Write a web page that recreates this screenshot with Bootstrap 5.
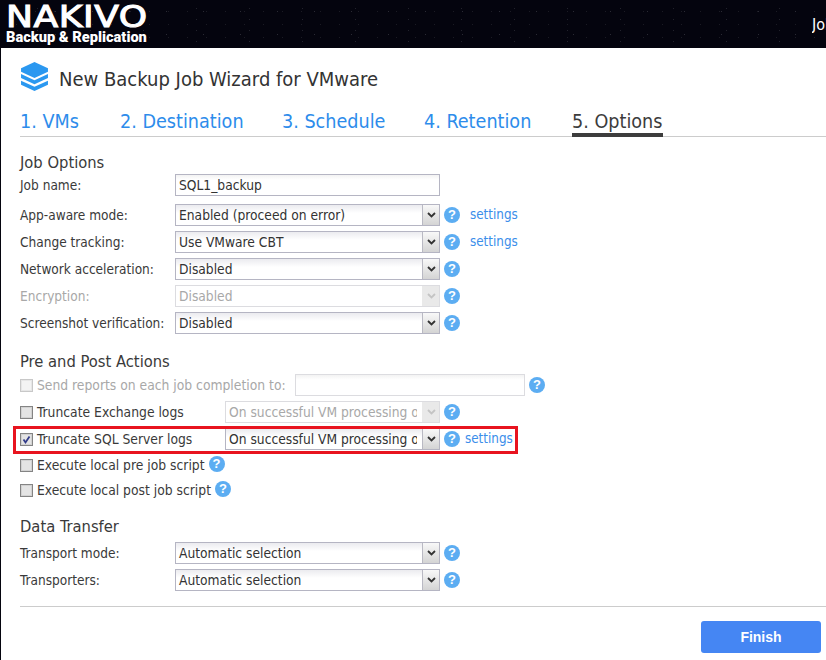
<!DOCTYPE html>
<html lang="en">
<head>
<meta charset="utf-8">
<title>New Backup Job Wizard</title>
<link href="https://cdn.jsdelivr.net/npm/bootstrap@5.3.0/dist/css/bootstrap.min.css" rel="stylesheet">
<style>
html,body{height:660px;overflow:hidden;}
body{background:#04040e;font-family:"DejaVu Sans","Noto Sans",sans-serif;font-stretch:condensed;font-size:13.3px;color:#3a3a3a;line-height:1;}
.app-head{height:48px;padding-left:6px;color:#fff;overflow:hidden;
 background-color:#04040e;
 background-image:radial-gradient(circle,#2a2a34 0,#2a2a34 .6px,transparent 1px),radial-gradient(circle,#1b1b24 0,#1b1b24 .6px,transparent 1px),radial-gradient(circle,#22222c 0,#22222c .5px,transparent 1px);
 background-size:37px 23px,19px 13px,53px 11px;background-position:0 0,7px 5px,11px 3px;}
.logo-main{font-family:"DejaVu Sans",sans-serif;font-stretch:normal;font-weight:400;-webkit-text-stroke:1.1px #fff;font-size:30px;letter-spacing:.5px;line-height:27px;height:27px;margin-top:3px;transform:scaleX(1.2);transform-origin:left center;}
.logo-sub{font-family:"Roboto",sans-serif;font-stretch:normal;font-weight:900;font-size:14.6px;line-height:15px;}
.head-user{font-size:16px;font-weight:500;width:14px;overflow:hidden;margin-top:17px;white-space:nowrap;}
.wiz{background:#fff;height:612px;margin-left:1px;padding-left:19px;}
.wiz-title{height:60px;padding-left:1px;gap:11px;font-size:20px;color:#333;}
.wiz-title svg{margin-top:-3px;}
.wiz-title span{margin-top:2px;}
.wiz-tabs{height:29px;border-bottom:1px solid #ccc;}
.wiz-tab{font-size:19.6px;color:#2d8ceb;text-decoration:none;height:29px;line-height:28px;white-space:nowrap;flex:none;}
.wiz-tab.on{color:#3c3c3c;border-bottom:4px solid #3d3d3d;}
.t1{width:100px;}.t2{width:162px;}.t3{width:142px;}.t4{width:148px;}.t5{width:91px;}
.sect{font-size:16.4px;color:#3a3a3a;height:22px;line-height:22px;}
.frow{height:22px;margin-bottom:5px;}
.flabel{width:155px;white-space:nowrap;flex:none;font-size:13.55px;padding-top:2px;}
.flabel.off,.cb-text.off{color:#a8a8a8;}
.tbox{width:265px;height:22px;border:1px solid #b5b5c3;background:linear-gradient(#f3f3f3,#fff 5px);padding-left:3px;font:inherit;font-size:13.7px;color:#333;border-radius:0;}
.tbox.off{border-color:#dcdce0;}
.combo{width:265px;height:22px;border:1px solid #b5b5c3;background:linear-gradient(#ebebef,#fff 8px);flex:none;overflow:hidden;}
.combo.short{width:215px;}
.combo.short .combo-val{margin-right:5px;}
.combo-val{flex:1;padding-left:3px;white-space:nowrap;overflow:hidden;color:#333;line-height:21px;font-size:13.7px;}
.combo-btn{width:17px;height:100%;background:linear-gradient(#f8f8f8,#d4d4d4);border-left:1px solid #b9b9c3;flex:none;}
.combo.off{border-color:#dcdce0;background:#fff;}
.combo.off .combo-val{color:#a8a8a8;}
.combo.off .combo-btn{background:#e9e9e9;border-left-color:#e9e9e9;}
.qm{width:16px;height:16px;border-radius:50%;background:#5cadf2;color:#fff;font-family:"Liberation Sans",sans-serif;font-stretch:normal;font-weight:700;font-size:13px;line-height:16px;text-align:center;flex:none;margin-left:4px;}
.qm-up{margin-top:-2px;margin-bottom:1px;}
.lnk{color:#3b8eea;text-decoration:none;margin-left:10px;white-space:nowrap;}
.lnk.near{margin-left:5px;}
.form-check-input.cbx{width:13px;height:13px;margin:0 4px 0 0;border:1px solid #848484;border-radius:0;background-color:#e4e4e4;flex:none;float:none;box-shadow:inset 0 0 0 1px #d2d2d2;}
.form-check-input.cbx:checked{background-color:#e4e4e4;border-color:#848484;background-size:11px 11px;background-image:url("data:image/svg+xml,%3csvg xmlns='http://www.w3.org/2000/svg' viewBox='0 0 11 11'%3e%3cpath d='M2.500 5.500l2 3 4-6' fill='none' stroke='%23333d8a' stroke-width='1.800'/%3e%3c/svg%3e");}
.form-check-input.cbx:disabled{opacity:1;border-color:#c8c8c8;background-color:#f3f3f3;box-shadow:inset 0 0 0 1px #e6e6e6;}
.cb-text{width:188px;white-space:nowrap;flex:none;font-size:13.75px;padding-top:2px;}
.cb-text.wide{width:258px;}
.tbox.mid{width:230px;}
.cb-auto{white-space:nowrap;font-size:13.75px;padding-top:2px;}
.hot{position:relative;}
.hot::after{content:"";position:absolute;left:-7px;top:-2px;width:505px;height:28px;border:3px solid #e8141f;pointer-events:none;}
.wiz-foot{border-top:1px solid #ccc;height:54px;padding:14px 5px 0 0;margin-top:15px;}
.btn.finish{width:120px;height:32px;background:#4586f3;border:0;color:#fff;font-family:"Liberation Sans",sans-serif;font-stretch:normal;font-weight:700;font-size:14px;border-radius:3px;padding:0;}
.sec-a{margin-top:15px;}.sec-b{margin-top:17px;}.sec-c{margin-top:16px;}
.sect.a{margin-bottom:0;}.sect.b{margin-bottom:1px;}.sect.c{margin-bottom:4px;}
.mb-j{margin-bottom:8px;}
.frow.lo{height:20px;}
</style>
</head>
<body>
<header class="app-head d-flex justify-content-between">
  <div>
    <div class="logo-main">NAKIVO</div>
    <div class="logo-sub">Backup &amp; Replication</div>
  </div>
  <div class="head-user">Job</div>
</header>
<main class="wiz">
  <div class="wiz-title d-flex align-items-center">
    <svg width="27" height="29" viewBox="0 0 26 28" aria-hidden="true"><path fill="#2b98f0" d="M13 0l13 6v3.500L13 15.500 0 9.500V6z"/><path fill="#2b98f0" d="M0 11.500l13 6 13-6V15.500l-13 6-13-6z"/><path fill="#2b98f0" d="M0 18l13 6 13-6v4L13 28 0 22z"/></svg>
    <span>New Backup Job Wizard for VMware</span>
  </div>
  <nav class="wiz-tabs d-flex align-items-start">
    <a class="wiz-tab t1" href="#">1. VMs</a>
    <a class="wiz-tab t2" href="#">2. Destination</a>
    <a class="wiz-tab t3" href="#">3. Schedule</a>
    <a class="wiz-tab t4" href="#">4. Retention</a>
    <a class="wiz-tab t5 on" href="#">5. Options</a>
  </nav>
  <section class="sec-a">
    <div class="sect a">Job Options</div>
    <div class="frow mb-j d-flex align-items-center"><span class="flabel">Job name:</span><input class="tbox" value="SQL1_backup"></div>
    <div class="frow d-flex align-items-center"><span class="flabel">App-aware mode:</span><div class="combo d-flex"><div class="combo-val">Enabled (proceed on error)</div><div class="combo-btn d-flex align-items-center justify-content-center"><svg width="9" height="6" viewBox="0 0 9 6"><path d="M1 1l3.500 3.500L8 1" fill="none" stroke="#333" stroke-width="1.800"/></svg></div></div><span class="qm">?</span><a class="lnk" href="#">settings</a></div>
    <div class="frow d-flex align-items-center"><span class="flabel">Change tracking:</span><div class="combo d-flex"><div class="combo-val">Use VMware CBT</div><div class="combo-btn d-flex align-items-center justify-content-center"><svg width="9" height="6" viewBox="0 0 9 6"><path d="M1 1l3.500 3.500L8 1" fill="none" stroke="#333" stroke-width="1.800"/></svg></div></div><span class="qm">?</span><a class="lnk" href="#">settings</a></div>
    <div class="frow d-flex align-items-center"><span class="flabel">Network acceleration:</span><div class="combo d-flex"><div class="combo-val">Disabled</div><div class="combo-btn d-flex align-items-center justify-content-center"><svg width="9" height="6" viewBox="0 0 9 6"><path d="M1 1l3.500 3.500L8 1" fill="none" stroke="#333" stroke-width="1.800"/></svg></div></div><span class="qm">?</span></div>
    <div class="frow d-flex align-items-center"><span class="flabel off">Encryption:</span><div class="combo off d-flex"><div class="combo-val">Disabled</div><div class="combo-btn d-flex align-items-center justify-content-center"><svg width="9" height="6" viewBox="0 0 9 6"><path d="M1 1l3.500 3.500L8 1" fill="none" stroke="#c4c4c4" stroke-width="1.800"/></svg></div></div><span class="qm">?</span></div>
    <div class="frow d-flex align-items-center"><span class="flabel">Screenshot verification:</span><div class="combo d-flex"><div class="combo-val">Disabled</div><div class="combo-btn d-flex align-items-center justify-content-center"><svg width="9" height="6" viewBox="0 0 9 6"><path d="M1 1l3.500 3.500L8 1" fill="none" stroke="#333" stroke-width="1.800"/></svg></div></div><span class="qm">?</span></div>
  </section>
  <section class="sec-b">
    <div class="sect b">Pre and Post Actions</div>
    <div class="frow d-flex align-items-center"><input class="form-check-input cbx" type="checkbox" disabled><span class="cb-text wide off">Send reports on each job completion to:</span><input class="tbox mid off" disabled><span class="qm">?</span></div>
    <div class="frow d-flex align-items-center"><input class="form-check-input cbx" type="checkbox"><span class="cb-text">Truncate Exchange logs</span><div class="combo short off d-flex"><div class="combo-val">On successful VM processing only</div><div class="combo-btn d-flex align-items-center justify-content-center"><svg width="9" height="6" viewBox="0 0 9 6"><path d="M1 1l3.500 3.500L8 1" fill="none" stroke="#c4c4c4" stroke-width="1.800"/></svg></div></div><span class="qm">?</span></div>
    <div class="frow hot d-flex align-items-center"><input class="form-check-input cbx" type="checkbox" checked><span class="cb-text">Truncate SQL Server logs</span><div class="combo short d-flex"><div class="combo-val">On successful VM processing only</div><div class="combo-btn d-flex align-items-center justify-content-center"><svg width="9" height="6" viewBox="0 0 9 6"><path d="M1 1l3.500 3.500L8 1" fill="none" stroke="#333" stroke-width="1.800"/></svg></div></div><span class="qm">?</span><a class="lnk near" href="#">settings</a></div>
    <div class="frow lo d-flex align-items-center"><input class="form-check-input cbx" type="checkbox"><span class="cb-auto">Execute local pre job script</span><span class="qm qm-up">?</span></div>
    <div class="frow lo d-flex align-items-center"><input class="form-check-input cbx" type="checkbox"><span class="cb-auto">Execute local post job script</span><span class="qm qm-up">?</span></div>
  </section>
  <section class="sec-c">
    <div class="sect c">Data Transfer</div>
    <div class="frow d-flex align-items-center"><span class="flabel">Transport mode:</span><div class="combo d-flex"><div class="combo-val">Automatic selection</div><div class="combo-btn d-flex align-items-center justify-content-center"><svg width="9" height="6" viewBox="0 0 9 6"><path d="M1 1l3.500 3.500L8 1" fill="none" stroke="#333" stroke-width="1.800"/></svg></div></div><span class="qm">?</span></div>
    <div class="frow d-flex align-items-center"><span class="flabel">Transporters:</span><div class="combo d-flex"><div class="combo-val">Automatic selection</div><div class="combo-btn d-flex align-items-center justify-content-center"><svg width="9" height="6" viewBox="0 0 9 6"><path d="M1 1l3.500 3.500L8 1" fill="none" stroke="#333" stroke-width="1.800"/></svg></div></div><span class="qm">?</span></div>
  </section>
  <footer class="wiz-foot d-flex justify-content-end">
    <button class="btn finish" type="button">Finish</button>
  </footer>
</main>
<script src="https://cdn.jsdelivr.net/npm/bootstrap@5.3.0/dist/js/bootstrap.bundle.min.js"></script>
</body>
</html>
